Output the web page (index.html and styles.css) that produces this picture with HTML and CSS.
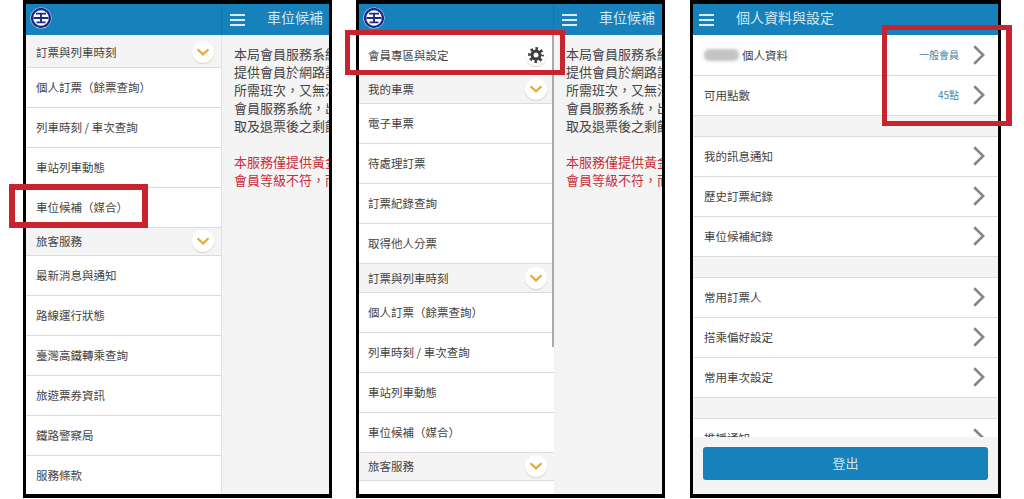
FILE: index.html
```html
<!DOCTYPE html>
<html lang="zh-Hant">
<head>
<meta charset="UTF-8">
<meta name="viewport" content="width=device-width, initial-scale=1.0">
<title>車位候補</title>
<link rel="stylesheet" href="styles.css">
</head>
<body>

<svg class="defs" width="0" height="0">
    <symbol id="logo" viewBox="0 0 22 22">
        <circle cx="11" cy="11" r="10.6" fill="#fff"/>
        <circle cx="11" cy="11" r="9" fill="#fff" stroke="#1b2a86" stroke-width="2.4"/>
        <path d="M6 6.6h10M3.5 11h15M6.5 15.4h9M11 6.6v8.8" fill="none" stroke="#1b2a86" stroke-width="1.9"/>
    </symbol>
    <symbol id="fold" viewBox="0 0 14 8">
        <path d="M1.5 1.2 7 6.4l5.5-5.2" fill="none" stroke="#e6aa3e" stroke-width="2.2"/>
    </symbol>
    <symbol id="next" viewBox="0 0 12 20">
        <path d="M1.2 1.2 10.2 10l-9 8.8" fill="none" stroke="#858585" stroke-width="2.6"/>
    </symbol>
    <symbol id="gear" viewBox="0 0 16 16">
        <circle cx="8" cy="8" r="6.5" fill="none" stroke="#3d3d3d" stroke-width="2.8" stroke-dasharray="2.55 2.55" stroke-dashoffset="1.27"/>
        <circle cx="8" cy="8" r="4" fill="none" stroke="#3d3d3d" stroke-width="3"/>
    </symbol>
</svg>

<!-- left phone: side menu open -->
<div class="phone">
    <div class="screen">
        <div class="topbar">
            <div class="topbar-side"><svg class="logo"><use href="#logo"/></svg></div>
            <div class="burger"><span></span><span></span><span></span></div>
            <div class="title">車位候補</div>
        </div>
        <div class="content">
            <div class="side">
                <div class="section first-section">訂票與列車時刻<span class="round"><svg class="fold"><use href="#fold"/></svg></span></div>
                <div class="item">個人訂票（餘票查詢）</div>
                <div class="item">列車時刻 / 車次查詢</div>
                <div class="item">車站列車動態</div>
                <div class="item">車位候補（媒合）</div>
                <div class="section">旅客服務<span class="round"><svg class="fold"><use href="#fold"/></svg></span></div>
                <div class="item">最新消息與通知</div>
                <div class="item">路線運行狀態</div>
                <div class="item">臺灣高鐵轉乘查詢</div>
                <div class="item">旅遊票券資訊</div>
                <div class="item">鐵路警察局</div>
                <div class="item">服務條款</div>
            </div>
            <div class="main">
                <p>本局會員服務系統<br>提供會員於網路訂<br>所需班次，又無法<br>會員服務系統，出<br>取及退票後之剩餘</p>
                <p class="warn">本服務僅提供黃金<br>會員等級不符，而</p>
            </div>
        </div>
    </div>
    <div class="mark mark-a"></div>
</div>

<!-- middle phone: menu scrolled to top -->
<div class="phone">
    <div class="screen">
        <div class="topbar">
            <div class="topbar-side narrow"><svg class="logo"><use href="#logo"/></svg></div>
            <div class="burger"><span></span><span></span><span></span></div>
            <div class="title">車位候補</div>
        </div>
        <div class="content">
            <div class="side narrow">
                <div class="scrollbar"></div>
                <div class="member">會員專區與設定<span class="round"><svg class="gear"><use href="#gear"/></svg></span></div>
                <div class="section">我的車票<span class="round"><svg class="fold"><use href="#fold"/></svg></span></div>
                <div class="item">電子車票</div>
                <div class="item">待處理訂票</div>
                <div class="item">訂票紀錄查詢</div>
                <div class="item">取得他人分票</div>
                <div class="section section-tall">訂票與列車時刻<span class="round"><svg class="fold"><use href="#fold"/></svg></span></div>
                <div class="item">個人訂票（餘票查詢）</div>
                <div class="item">列車時刻 / 車次查詢</div>
                <div class="item">車站列車動態</div>
                <div class="item">車位候補（媒合）</div>
                <div class="section">旅客服務<span class="round"><svg class="fold"><use href="#fold"/></svg></span></div>
                <div class="item">最新消息與通知</div>
            </div>
            <div class="main">
                <p>本局會員服務系統<br>提供會員於網路訂<br>所需班次，又無法<br>會員服務系統，出<br>取及退票後之剩餘</p>
                <p class="warn">本服務僅提供黃金<br>會員等級不符，而</p>
            </div>
        </div>
    </div>
    <div class="mark mark-b"></div>
</div>

<!-- right phone: member settings -->
<div class="phone phone-wide">
    <div class="screen">
        <div class="topbar">
            <div class="burger burger-left"><span></span><span></span><span></span></div>
            <div class="title title-left">個人資料與設定</div>
        </div>
        <div class="settings">
            <div class="set-row"><span class="blurred"></span>個人資料<span class="value">一般會員</span><svg class="next"><use href="#next"/></svg></div>
            <div class="set-row">可用點數<span class="value">45點</span><svg class="next"><use href="#next"/></svg></div>
            <div class="spacer"></div>
            <div class="set-row">我的訊息通知<svg class="next"><use href="#next"/></svg></div>
            <div class="set-row">歷史訂票紀錄<svg class="next"><use href="#next"/></svg></div>
            <div class="set-row">車位候補紀錄<svg class="next"><use href="#next"/></svg></div>
            <div class="spacer"></div>
            <div class="set-row">常用訂票人<svg class="next"><use href="#next"/></svg></div>
            <div class="set-row">搭乘偏好設定<svg class="next"><use href="#next"/></svg></div>
            <div class="set-row">常用車次設定<svg class="next"><use href="#next"/></svg></div>
            <div class="spacer"></div>
            <div class="set-row">推播通知<svg class="next"><use href="#next"/></svg></div>
        </div>
        <div class="logout-bar"><button class="logout">登出</button></div>
    </div>
    <div class="mark mark-c"></div>
</div>

</body>
</html>
```

FILE: styles.css
```css
html, body {
    height: 499px;
    overflow: hidden;
}
body {
    margin: 0;
    padding-left: 23px;
    display: flex;
    gap: 24px;
    background-color: #fff;
    font-family: "Noto Sans CJK TC", "Liberation Sans", sans-serif;
    color: #444;
}
.defs {
    position: absolute;
}
.phone {
    position: relative;
    box-sizing: border-box;
    width: 309px;
    height: 498px;
    border: 3px solid #000;
    border-top-width: 4px;
    border-bottom-width: 4px;
}
.phone-wide {
    width: 311px;
    margin-left: 1px;
}
.screen {
    position: relative;
    height: 100%;
    display: flex;
    flex-direction: column;
    overflow: hidden;
    background-color: #f4f4f4;
}
.topbar {
    flex: none;
    height: 31px;
    display: flex;
    align-items: center;
    background-color: #1681ba;
}
.topbar-side {
    flex: none;
    box-sizing: border-box;
    width: 196px;
    height: 100%;
    padding-left: 4px;
    display: flex;
    align-items: center;
    border-right: 1px solid #1573a6;
}
.topbar-side.narrow {
    width: 195px;
}
.logo {
    width: 22px;
    height: 22px;
    margin-bottom: 4px;
}
.burger {
    margin-left: 8px;
    width: 15px;
    display: flex;
    flex-direction: column;
    gap: 3px;
}
.burger span {
    height: 2px;
    background-color: #dcebf3;
}
.burger-left {
    margin-left: 6px;
}
.title {
    margin-left: 22px;
    margin-bottom: 6px;
    font-size: 14px;
    color: #d3e6f0;
}
.title-left {
    margin-left: 22px;
}
.content {
    flex: 1;
    min-height: 0;
    display: flex;
}
.side {
    position: relative;
    flex: none;
    box-sizing: border-box;
    width: 196px;
    border-right: 1px solid #e2e2e2;
    background-color: #fff;
    font-size: 11.5px;
}
.side.narrow {
    width: 195px;
    border-right: none;
}
.scrollbar {
    position: absolute;
    top: 0;
    right: 0;
    width: 2px;
    height: 312px;
    background-color: #a9a9a9;
}
.section, .item, .member {
    box-sizing: border-box;
    display: flex;
    align-items: center;
    justify-content: space-between;
    padding: 0 7px 2px 10px;
    border-bottom: 1px solid #dcdcdc;
}
.section {
    height: 28px;
    background-color: #f4f4f4;
}
.section-tall {
    height: 29px;
    padding-bottom: 1px;
}
.first-section {
    height: 33px;
    padding-top: 4px;
}
.item {
    height: 40px;
}
.member {
    height: 41px;
    border-bottom: none;
    padding-left: 9px;
}
.narrow .section, .narrow .item {
    padding-left: 9px;
}
.round {
    flex: none;
    width: 22px;
    height: 22px;
    display: flex;
    align-items: center;
    justify-content: center;
    border-radius: 50%;
    background-color: #fff;
    box-shadow: 0 1px 1px #d8d2be;
}
.fold {
    width: 14px;
    height: 8px;
}
.gear {
    width: 16px;
    height: 16px;
}
.main {
    flex: 1;
    min-width: 0;
    padding: 10px 0 0 12px;
    overflow: hidden;
    white-space: nowrap;
    font-size: 13px;
    line-height: 18px;
}
.main p {
    margin: 0 0 18px;
}
.main .warn {
    color: #c5303a;
}
.settings {
    padding-top: 1px;
    background-color: #fff;
    font-size: 11.5px;
}
.set-row {
    box-sizing: border-box;
    height: 40px;
    padding: 0 13px 2px 11px;
    display: flex;
    align-items: center;
    border-bottom: 1px solid #dcdcdc;
    background-color: #fff;
}
.spacer {
    box-sizing: border-box;
    height: 21px;
    border-bottom: 1px solid #dcdcdc;
    background-color: #f4f4f4;
}
.blurred {
    width: 35px;
    height: 12px;
    margin-right: 3px;
    border-radius: 5px;
    background-color: #c4c4c4;
    filter: blur(1.5px);
}
.value {
    margin-left: auto;
    font-size: 10px;
    color: #3b86a8;
}
.next {
    flex: none;
    width: 12px;
    height: 20px;
    margin-left: 14px;
}
.set-row:not(:has(.value)) .next {
    margin-left: auto;
}
.logout-bar {
    position: absolute;
    left: 0;
    right: 0;
    bottom: 0;
    box-sizing: border-box;
    height: 57px;
    padding: 10px 10px 0;
    background-color: #f4f4f4;
}
.logout {
    display: block;
    width: 100%;
    height: 33px;
    padding: 0 0 2px;
    border: none;
    border-radius: 3px;
    background-color: #1681ba;
    color: #d3e6f0;
    font-family: inherit;
    font-size: 13px;
}
.mark {
    position: absolute;
    box-sizing: border-box;
    border: 6px solid #c8242f;
}
.mark-a {
    left: -17px;
    top: 180px;
    width: 139px;
    height: 44px;
}
.mark-b {
    left: -14px;
    top: 26px;
    width: 220px;
    height: 45px;
    border-width: 5px;
}
.mark-c {
    left: 189px;
    top: 21px;
    width: 130px;
    height: 101px;
    border-width: 5px 6px 5px 5px;
}
```
